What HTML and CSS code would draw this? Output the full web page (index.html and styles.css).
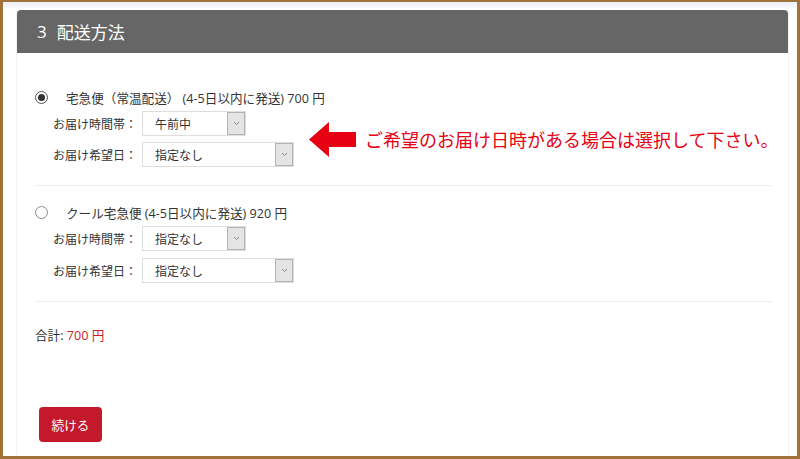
FILE: index.html
```html
<!DOCTYPE html>
<html lang="ja">
<head>
<meta charset="utf-8">
<link rel="stylesheet" href="styles.css">
</head>
<body>
<div class="frame">
  <div class="panel">
    <div class="panel-head"><span class="step">3</span><span>配送方法</span></div>
    <div class="panel-body">
      <div class="option first">
        <div class="radio-row"><span class="radio checked"></span><span class="opt-text">宅急便（常温配送） (4-5日以内に発送) 700 円</span></div>
        <div class="opt-main">
          <div class="fields">
            <div class="field"><span class="lbl">お届け時間帯：</span><div class="select short"><span class="val">午前中</span><span class="btn"><svg width="7" height="5" viewBox="0 0 7 5"><path d="M1 1l2.5 2.5L6 1" fill="none" stroke="#888" stroke-width="1"/></svg></span></div></div>
            <div class="field"><span class="lbl">お届け希望日：</span><div class="select long"><span class="val">指定なし</span><span class="btn"><svg width="7" height="5" viewBox="0 0 7 5"><path d="M1 1l2.5 2.5L6 1" fill="none" stroke="#888" stroke-width="1"/></svg></span></div></div>
          </div>
          <div class="note">
            <svg class="arrow" width="47" height="35" viewBox="0 0 47 35"><path d="M0 17.5L20 0V10H47V25H20V35Z" fill="#e60012"/></svg>
            <span class="note-text">ご希望のお届け日時がある場合は選択して下さい。</span>
          </div>
        </div>
      </div>
      <div class="option second">
        <div class="radio-row"><span class="radio"></span><span class="opt-text">クール宅急便 (4-5日以内に発送) 920 円</span></div>
        <div class="fields">
          <div class="field"><span class="lbl">お届け時間帯：</span><div class="select short"><span class="val">指定なし</span><span class="btn"><svg width="7" height="5" viewBox="0 0 7 5"><path d="M1 1l2.5 2.5L6 1" fill="none" stroke="#888" stroke-width="1"/></svg></span></div></div>
          <div class="field"><span class="lbl">お届け希望日：</span><div class="select long"><span class="val">指定なし</span><span class="btn"><svg width="7" height="5" viewBox="0 0 7 5"><path d="M1 1l2.5 2.5L6 1" fill="none" stroke="#888" stroke-width="1"/></svg></span></div></div>
        </div>
      </div>
      <div class="total">合計: <span class="price">700 円</span></div>
      <button class="continue">続ける</button>
    </div>
  </div>
</div>
</body>
</html>
```
FILE: styles.css
```css
html, body {
  margin: 0;
  padding: 0;
}
body {
  font-family: "Open Sans", "Noto Sans CJK JP", sans-serif;
  color: #333;
  font-size: 12px;
}
.frame {
  box-sizing: border-box;
  width: 800px;
  height: 459px;
  border-style: solid;
  border-color: #a1733a;
  border-width: 2px 3px 3px 3px;
  background: linear-gradient(#eef0f8 0, #f4f5fa 4px, #fff 7px);
  padding: 8px 8px 0 13px;
  overflow: hidden;
}
.panel {
  height: 100%;
  background: #fff;
  border-left: 1px solid #f2f2f2;
  border-right: 1px solid #f2f2f2;
}
.panel-head {
  height: 43px;
  background: #666;
  border-radius: 4px 4px 0 0;
  color: #fff;
  font-size: 17px;
  display: flex;
  align-items: center;
  padding-left: 20px;
}
.step {
  margin-right: 10px;
}
.panel-body {
  padding: 0 16px 0 18px;
}
.option {
  border-bottom: 1px solid #ececec;
  padding-bottom: 18px;
}
.option.first {
  padding-top: 34px;
}
.option.second {
  padding-top: 16px;
}
.radio-row {
  display: flex;
  align-items: center;
  height: 20px;
  margin-bottom: 4px;
}
.opt-text {
  font-size: 12.6px;
}
.second .fields {
  gap: 7px;
}
.radio {
  box-sizing: border-box;
  width: 13px;
  height: 13px;
  border: 1px solid #8a8a8a;
  border-radius: 50%;
  margin-right: 18px;
  display: flex;
  align-items: center;
  justify-content: center;
}
.radio.checked {
  border-color: #555;
}
.radio.checked::after {
  content: "";
  width: 7px;
  height: 7px;
  border-radius: 50%;
  background: #333;
}
.opt-main {
  display: flex;
  align-items: center;
}
.fields {
  display: flex;
  flex-direction: column;
  gap: 6px;
  padding-left: 18px;
}
.field {
  display: flex;
  align-items: center;
}
.lbl {
  width: 89px;
}
.select {
  box-sizing: border-box;
  height: 25px;
  border: 1px solid #dedede;
  background: #fff;
  display: flex;
  align-items: stretch;
}
.select.short { width: 104px; }
.select.long { width: 152px; }
.val {
  flex: 1;
  padding-left: 12px;
  display: flex;
  align-items: center;
}
.btn {
  box-sizing: border-box;
  width: 18px;
  border: 1px solid #b3b3b3;
  background: #e4e4e4;
  display: flex;
  align-items: center;
  justify-content: center;
}
.note {
  display: flex;
  align-items: center;
  margin-left: 15px;
}
.arrow {
  display: block;
  margin-right: 9px;
}
.note-text {
  color: #e60012;
  font-size: 18px;
  white-space: nowrap;
}
.total {
  margin-top: 24px;
  line-height: 20px;
  font-size: 12.6px;
}
.price {
  color: #c8232c;
}
.continue {
  display: block;
  margin: 61px 0 0 4px;
  width: 63px;
  height: 35px;
  border: none;
  border-radius: 4px;
  background: #c3192b;
  color: #fff;
  font-family: "Open Sans", "Noto Sans CJK JP", sans-serif;
  font-size: 12.6px;
  padding: 0;
}
```
